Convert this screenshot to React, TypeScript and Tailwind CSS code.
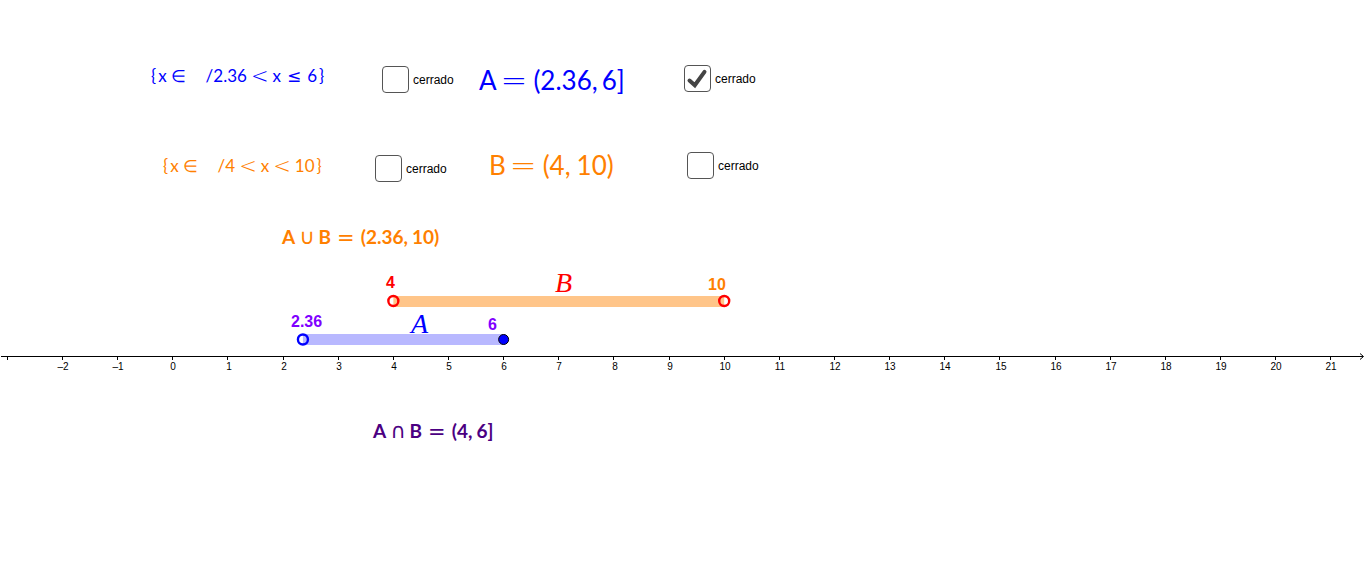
import { useState, type ReactNode } from "react";

const UNIT = 55.14;
const ORIGIN = 172.8;
const toX = (value: number) => ORIGIN + value * UNIT;

const TICKS = Array.from({ length: 25 }, (_, i) => i - 3);

const REL_STYLE = {
  small: "mx-1 text-[21px] font-extralight",
  element: "mx-1 text-[17px] font-extralight",
  leq: "mx-1.5 text-[17px] font-normal",
  large: "ml-1 mr-1.5 pb-1 text-[32px] font-extralight",
  cup: "mx-1 text-[21px] font-normal",
  bold: "mx-1.5 pt-0.5 text-[21px] font-normal",
};

/** Relation or operator sign, centred on the height of the formula. */
function Rel({ kind, children }: { kind: keyof typeof REL_STYLE; children: ReactNode }) {
  return (
    <span className={`self-center font-['DejaVu_Sans',sans-serif] leading-none ${REL_STYLE[kind]}`}>{children}</span>
  );
}

function Formula({ className, children }: { className: string; children: ReactNode }) {
  return (
    <div className={`absolute flex items-baseline whitespace-nowrap font-['Lato',sans-serif] ${className}`}>
      {children}
    </div>
  );
}

function ClosedBox({ id, className, initial = false }: { id: string; className: string; initial?: boolean }) {
  const [closed, setClosed] = useState(initial);
  return (
    <div className={`absolute flex items-center gap-1 ${className}`}>
      <span className="relative flex size-[27px]">
        <input
          id={id}
          type="checkbox"
          checked={closed}
          onChange={(e) => setClosed(e.target.checked)}
          className="size-[27px] appearance-none rounded-[4px] border border-[#555555] bg-white"
        />
        {closed && (
          <svg viewBox="0 0 27 27" className="pointer-events-none absolute inset-0 size-[27px]" aria-hidden="true">
            <path d="M5.5 15.5L10.8 20.2L20.5 6.8" fill="none" stroke="#444444" strokeWidth="4" strokeLinecap="round" />
          </svg>
        )}
      </span>
      <label htmlFor={id} className="font-['Liberation_Sans',sans-serif] text-xs text-black">
        cerrado
      </label>
    </div>
  );
}

function NumberLine() {
  return (
    <svg
      viewBox="0 0 1366 566"
      className="block w-full font-['Liberation_Sans',sans-serif]"
      role="img"
      aria-label="A y B en la recta"
    >
      <g stroke="#000000" strokeWidth="1">
        <path d="M1 356.5H1363M1360 353.5L1363.5 356.5L1360 359.5" fill="none" />
        {TICKS.map((t) => (
          <path key={t} d={`M${Math.floor(toX(t)) + 0.5} 356V360`} />
        ))}
      </g>
      <g fontSize="10" fill="#000000" textAnchor="middle">
        {TICKS.filter((t) => t > -3).map((t) => (
          <text key={t} x={Math.round(toX(t) + 0.6)} y="370">
            {t < 0 ? `–${-t}` : t}
          </text>
        ))}
      </g>

      <rect x={toX(4)} y="296" width={toX(10) - toX(4)} height="11" fill="#ffc589" />
      <rect x={toX(2.36)} y="334" width={toX(6) - toX(2.36)} height="11" fill="#b8b8ff" />
      <g fill="none" strokeWidth="2.4">
        <circle cx={toX(4)} cy="301" r="5" stroke="#ff0000" />
        <circle cx={toX(10)} cy="301" r="5" stroke="#ff0000" />
        <circle cx={toX(2.36)} cy="339.5" r="5" stroke="#0000ff" />
      </g>
      <circle cx={toX(6)} cy="339.5" r="5" fill="#0000ff" stroke="#000000" />

      <g fontSize="16" fontWeight="700">
        <text x="386" y="288" fill="#ff0000">4</text>
        <text x="708" y="290" fill="#ff8000">10</text>
        <text x="291" y="327" fill="#7f00ff">2.36</text>
        <text x="488" y="330" fill="#7f00ff">6</text>
      </g>
      <g fontSize="28" fontStyle="italic" className="font-['Liberation_Serif',serif]">
        <text x="555" y="292" fill="#ff0000">B</text>
        <text x="411" y="333" fill="#0000ff">A</text>
      </g>
    </svg>
  );
}

export default function App() {
  return (
    <main className="relative min-h-screen overflow-hidden bg-white">
      <NumberLine />

      <Formula className="left-[151px] top-16 text-[17px] leading-6 text-[#0000ff]">
        <span>{"{"}</span>
        <span className="ml-0.5">x</span>
        <Rel kind="element">∈</Rel>
        <span className="ml-4">/2.36</span>
        <Rel kind="small">&lt;</Rel>
        <span>x</span>
        <Rel kind="leq">≤</Rel>
        <span>6</span>
        <span className="ml-0.5">{"}"}</span>
      </Formula>
      <ClosedBox id="a-left" className="left-[382px] top-[66px]" />
      <Formula className="left-[479px] top-16 text-[26px] leading-8 text-[#0000ff]">
        <span>A</span>
        <Rel kind="large">=</Rel>
        <span>(2.36,</span>
        <span className="ml-1">6]</span>
      </Formula>
      <ClosedBox id="a-right" className="left-[684px] top-[65px]" initial />

      <Formula className="left-[163px] top-[154px] text-[17px] leading-6 text-[#ff8000]">
        <span>{"{"}</span>
        <span className="ml-0.5">x</span>
        <Rel kind="element">∈</Rel>
        <span className="ml-4">/4</span>
        <Rel kind="small">&lt;</Rel>
        <span>x</span>
        <Rel kind="small">&lt;</Rel>
        <span>10</span>
        <span className="ml-0.5">{"}"}</span>
      </Formula>
      <ClosedBox id="b-left" className="left-[375px] top-[155px]" />
      <Formula className="left-[489px] top-[149px] text-[26px] leading-8 text-[#ff8000]">
        <span>B</span>
        <Rel kind="large">=</Rel>
        <span>(4,</span>
        <span className="ml-1.5">10)</span>
      </Formula>
      <ClosedBox id="b-right" className="left-[687px] top-[152px]" />

      <Formula className="left-[282px] top-[225px] text-[19px] font-bold leading-6 text-[#ff8000]">
        <span>A</span>
        <Rel kind="cup">∪</Rel>
        <span>B</span>
        <Rel kind="bold">=</Rel>
        <span>(2.36,</span>
        <span className="ml-1">10)</span>
      </Formula>
      <Formula className="left-[373px] top-[419px] text-[19px] font-bold leading-6 text-[#4b0082]">
        <span>A</span>
        <Rel kind="cup">∩</Rel>
        <span>B</span>
        <Rel kind="bold">=</Rel>
        <span>(4,</span>
        <span className="ml-1">6]</span>
      </Formula>
    </main>
  );
}
